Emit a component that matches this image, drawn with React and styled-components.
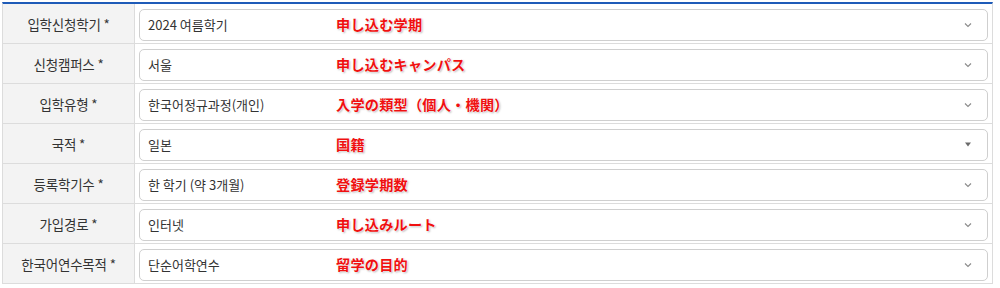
import React from "react";
import styled, { createGlobalStyle } from "styled-components";

const Global = createGlobalStyle`
  html, body { margin: 0; padding: 0; background: #fff; }
  body { font-family: "Noto Sans CJK KR", "Noto Sans", sans-serif; }
`;

const Table = styled.div`
  margin: 2px 7px 0 2px;
  border-top: 2px solid #1e5bb8;
  border-left: 1px solid #dcdcdc;
  border-right: 1px solid #dcdcdc;
`;

const Row = styled.div`
  display: grid;
  grid-template-columns: 132px 1fr;
  height: 40px;
  box-sizing: border-box;
  border-bottom: 1px solid #dcdcdc;
`;

const Label = styled.div`
  display: flex;
  align-items: center;
  justify-content: center;
  background: #f3f3f3;
  border-right: 1px solid #dcdcdc;
  font-size: 13.5px;
  color: #333;
  letter-spacing: -0.2px;
`;

const Cell = styled.div`
  position: relative;
  padding: 4px 4px 2px 4px;
  display: flex;
  align-items: center;
`;

const Select = styled.div`
  flex: 1;
  height: 32px;
  box-sizing: border-box;
  border: 1px solid #cfcfcf;
  border-radius: 5px;
  background: #fff;
  display: flex;
  align-items: center;
  justify-content: space-between;
  padding: 0 15px 0 8px;
  font-size: 13px;
  color: #333;
`;

const Note = styled.span`
  position: absolute;
  left: 201px;
  top: 50%;
  transform: translateY(-50%);
  font-family: "Noto Sans CJK JP", "Noto Sans", sans-serif;
  font-weight: 700;
  font-size: 14.2px;
  color: #f01010;
  letter-spacing: 0.2px;
  text-shadow: 0 0 2px #fff, 0 0 2px #fff, 1px 1px 2px rgba(0, 0, 0, 0.35);
  pointer-events: none;
`;

const Chevron = () => (
  <svg width="8" height="6" viewBox="0 0 8 6">
    <polyline points="1,1.5 4,4.5 7,1.5" fill="none" stroke="#8a8a8a" strokeWidth="1.1" />
  </svg>
);

const Triangle = () => (
  <svg width="8" height="5" viewBox="0 0 8 5">
    <polygon points="1,0.5 7,0.5 4,4.5" fill="#6a6a6a" />
  </svg>
);

const rows = [
  { label: "입학신청학기 *", value: "2024 여름학기", note: "申し込む学期" },
  { label: "신청캠퍼스 *", value: "서울", note: "申し込むキャンパス" },
  { label: "입학유형 *", value: "한국어정규과정(개인)", note: "入学の類型（個人・機関）" },
  { label: "국적 *", value: "일본", note: "国籍", native: true },
  { label: "등록학기수 *", value: "한 학기 (약 3개월)", note: "登録学期数" },
  { label: "가입경로 *", value: "인터넷", note: "申し込みルート" },
  { label: "한국어연수목적 *", value: "단순어학연수", note: "留学の目的" },
];

export default function App() {
  return (
    <>
      <Global />
      <Table>
        {rows.map((r) => (
          <Row key={r.label}>
            <Label>{r.label}</Label>
            <Cell>
              <Select>
                <span>{r.value}</span>
                {r.native ? <Triangle /> : <Chevron />}
              </Select>
              <Note>{r.note}</Note>
            </Cell>
          </Row>
        ))}
      </Table>
    </>
  );
}
